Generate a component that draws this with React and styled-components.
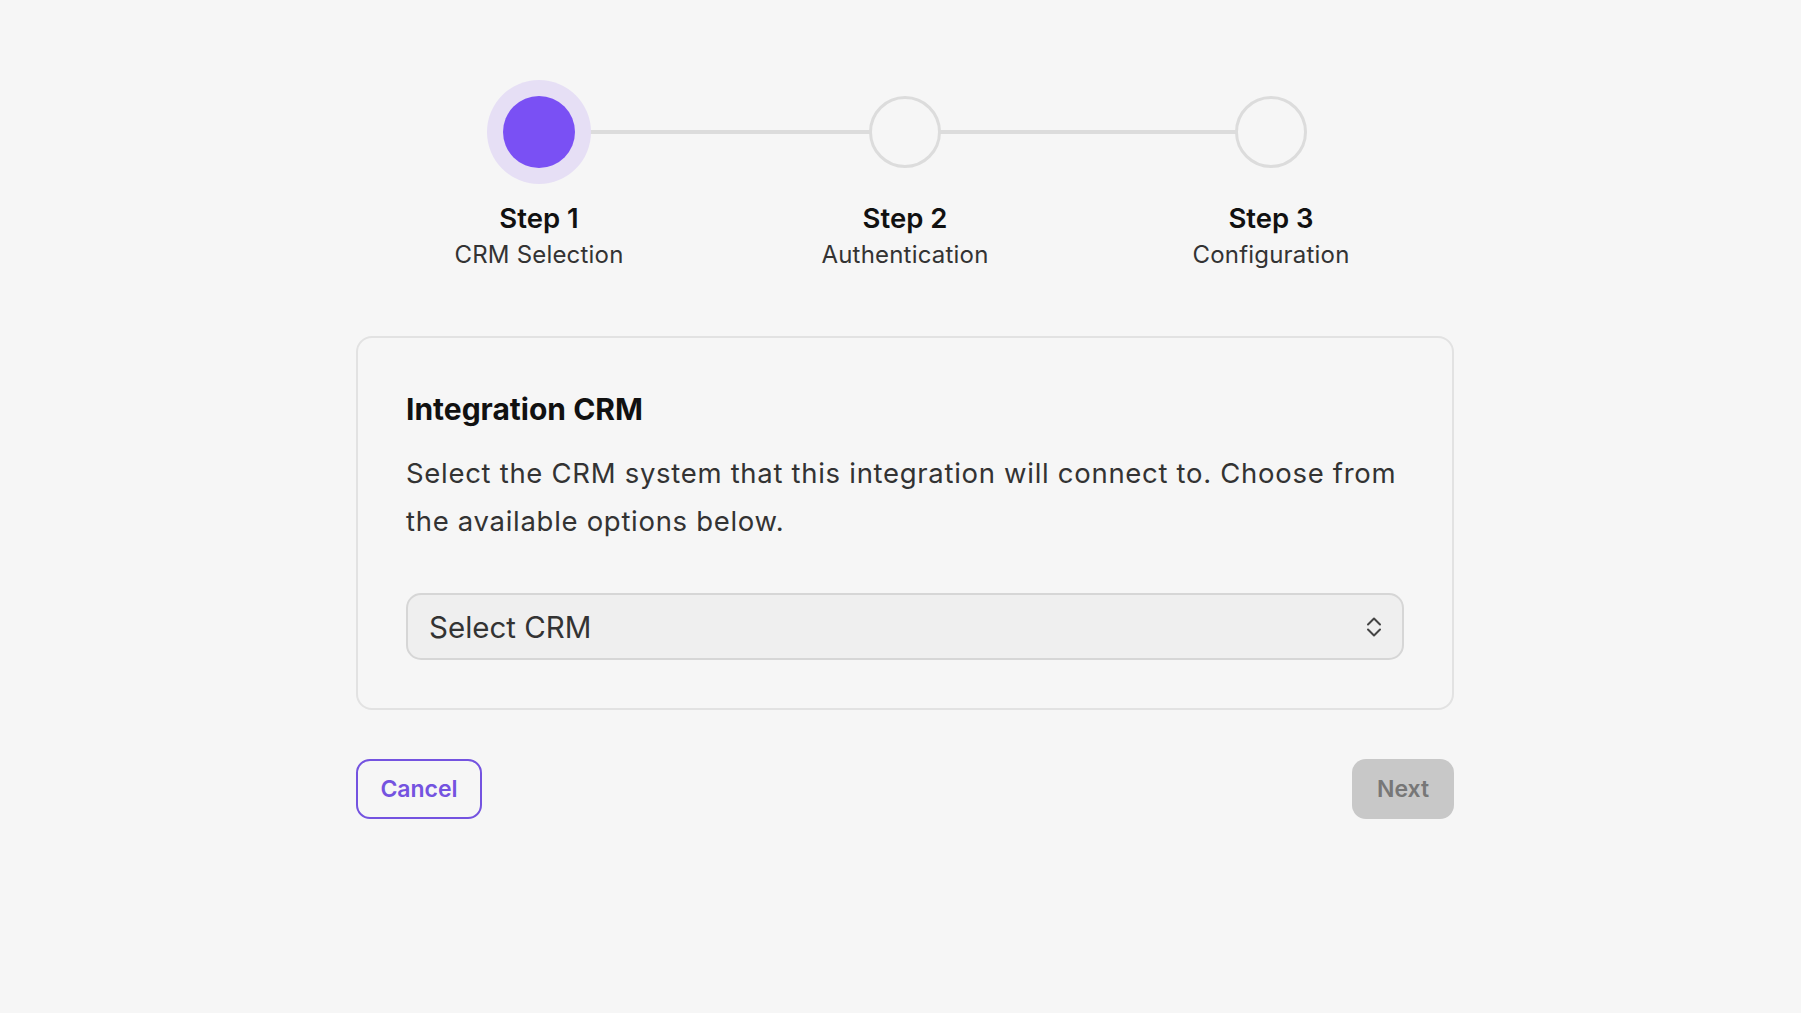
import React from "react";
import styled, { createGlobalStyle } from "styled-components";

const STEPS = [
  { title: "Step 1", label: "CRM Selection" },
  { title: "Step 2", label: "Authentication" },
  { title: "Step 3", label: "Configuration" },
];

const ACTIVE_STEP = 0;

const GlobalStyle = createGlobalStyle`
  * {
    box-sizing: border-box;
  }

  body {
    margin: 0;
    background: #f6f6f6;
    font-family: Inter, "Noto Sans", "Liberation Sans", sans-serif;
    color: #111111;
  }
`;

const App = () => {
  return (
    <>
      <GlobalStyle />
      <Page>
        <Container>
          <Stepper>
            {STEPS.map((step, index) => (
              <Step key={step.title} $last={index === STEPS.length - 1}>
                <Circle $active={index === ACTIVE_STEP} />
                <StepTitle>{step.title}</StepTitle>
                <StepLabel>{step.label}</StepLabel>
              </Step>
            ))}
          </Stepper>

          <Card>
            <Heading>Integration CRM</Heading>
            <Description>
              Select the CRM system that this integration will connect to.
              Choose from the available options below.
            </Description>
            <SelectTrigger type="button">
              <span>Select CRM</span>
              <svg width="16" height="22" viewBox="0 0 16 22" fill="none">
                <path
                  d="M2 8.5L8 2.5L14 8.5M2 13.5L8 19.5L14 13.5"
                  stroke="#444444"
                  strokeWidth="2"
                  strokeLinecap="round"
                  strokeLinejoin="round"
                />
              </svg>
            </SelectTrigger>
          </Card>

          <Actions>
            <CancelButton type="button">Cancel</CancelButton>
            <NextButton type="button" disabled>
              Next
            </NextButton>
          </Actions>
        </Container>
      </Page>
    </>
  );
};

const Page = styled.div`
  display: flex;
  flex-direction: column;
  align-items: center;
  min-height: 100vh;
  padding: 96px 0 0 9px;
`;

const Container = styled.div`
  display: flex;
  flex-direction: column;
  width: 1098px;
`;

const Stepper = styled.div`
  display: grid;
  grid-template-columns: repeat(3, 1fr);
`;

const Step = styled.div`
  position: relative;
  display: flex;
  flex-direction: column;
  align-items: center;

  &::after {
    content: "";
    display: ${({ $last }) => ($last ? "none" : "block")};
    position: absolute;
    top: 34px;
    left: 50%;
    width: 100%;
    height: 4px;
    background: #dcdcdc;
    z-index: 0;
  }
`;

const Circle = styled.div`
  position: relative;
  z-index: 1;
  width: 72px;
  height: 72px;
  border-radius: 50%;
  background: ${({ $active }) => ($active ? "#7a50f4" : "#f6f6f6")};
  border: ${({ $active }) => ($active ? "none" : "3px solid #dcdcdc")};
  box-shadow: ${({ $active }) => ($active ? "0 0 0 16px #e6dff5" : "none")};
`;

const StepTitle = styled.div`
  margin-top: 33px;
  font-size: 27.5px;
  line-height: 34px;
  font-weight: 600;
  color: #111111;
`;

const StepLabel = styled.div`
  margin-top: 4px;
  font-size: 24px;
  line-height: 32px;
  font-weight: 400;
  letter-spacing: 0.2px;
  color: #333333;
`;

const Card = styled.div`
  margin-top: 65px;
  padding: 53px 48px 48px;
  border: 2px solid #e2e2e2;
  border-radius: 16px;
  background: #f6f6f6;
`;

const Heading = styled.h2`
  margin: 0;
  font-size: 30px;
  line-height: 36px;
  font-weight: 700;
  color: #111111;
`;

const Description = styled.p`
  margin: 22px 0 0;
  font-size: 27.5px;
  line-height: 48px;
  font-weight: 400;
  letter-spacing: 0.7px;
  color: #333333;
`;

const SelectTrigger = styled.button`
  display: flex;
  align-items: center;
  justify-content: space-between;
  width: 100%;
  height: 67px;
  margin-top: 48px;
  padding: 0 20px 0 21px;
  border: 2.5px solid #d6d6d6;
  border-radius: 15px;
  background: #efefef;
  font-family: inherit;
  font-size: 29.5px;
  font-weight: 400;
  color: #333333;
  cursor: pointer;
`;

const Actions = styled.div`
  display: flex;
  justify-content: space-between;
  margin-top: 49px;
`;

const BaseButton = styled.button`
  height: 60px;
  border-radius: 14px;
  font-family: inherit;
  font-size: 23px;
  font-weight: 600;
  cursor: pointer;
`;

const CancelButton = styled(BaseButton)`
  width: 126px;
  border: 2px solid #7453e0;
  background: transparent;
  color: #7453e0;
`;

const NextButton = styled(BaseButton)`
  width: 102px;
  border: none;
  background: #c8c8c8;
  color: #777777;
  cursor: default;
`;

export default App;
